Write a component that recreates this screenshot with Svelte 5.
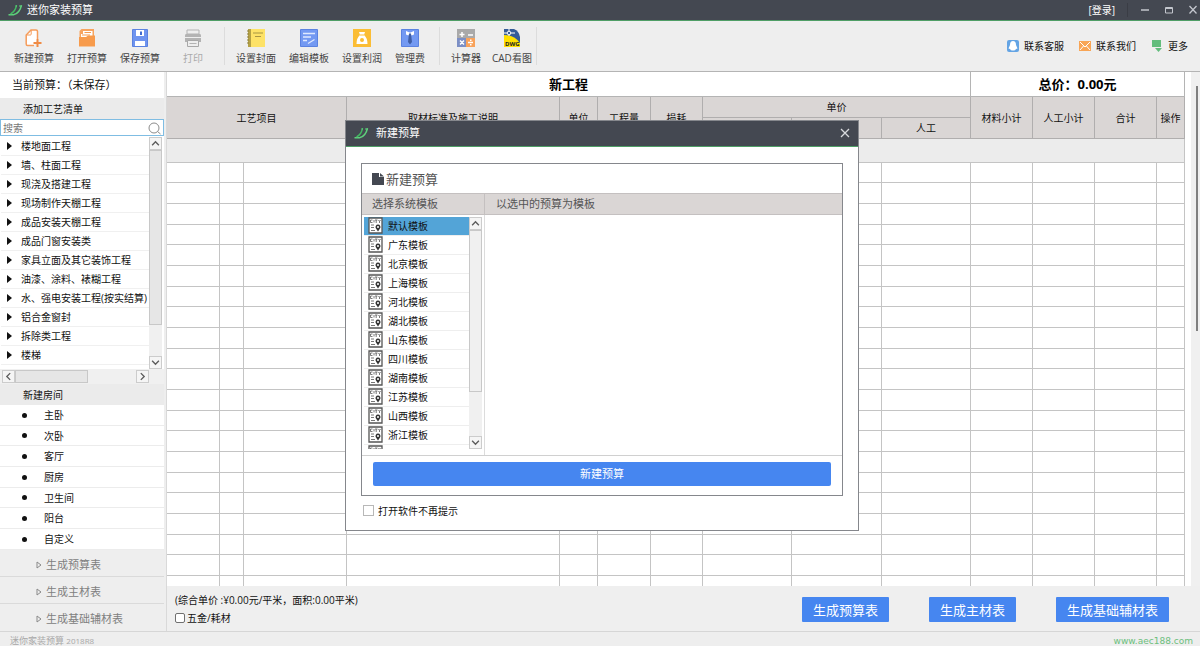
<script>
  const fileTools = [
    { icon: 'new', label: '新建预算' },
    { icon: 'open', label: '打开预算' },
    { icon: 'save', label: '保存预算' },
    { icon: 'print', label: '打印', disabled: true },
  ];
  const editTools = [
    { icon: 'cover', label: '设置封面' },
    { icon: 'template', label: '编辑模板' },
    { icon: 'profit', label: '设置利润' },
    { icon: 'fee', label: '管理费' },
  ];
  const extraTools = [
    { icon: 'calc', label: '计算器' },
    { icon: 'cad', label: 'CAD看图' },
  ];

  const crafts = [
    '楼地面工程', '墙、柱面工程', '现浇及搭建工程', '现场制作天棚工程',
    '成品安装天棚工程', '成品门窗安装类', '家具立面及其它装饰工程',
    '油漆、涂料、裱糊工程', '水、强电安装工程(按实结算)', '铝合金窗封',
    '拆除类工程', '楼梯',
  ];
  const rooms = ['主卧', '次卧', '客厅', '厨房', '卫生间', '阳台', '自定义'];
  const reports = ['生成预算表', '生成主材表', '生成基础辅材表'];

  const templates = [
    '默认模板', '广东模板', '北京模板', '上海模板', '河北模板', '湖北模板',
    '山东模板', '四川模板', '湖南模板', '江苏模板', '山西模板', '浙江模板', '',
  ];

  // relative column widths, the table stretches them to the window
  const columns = [53, 24, 103, 213, 38, 53, 52, 89, 90, 89, 62, 62, 62, 28];
  const emptyRows = Array.from({ length: 21 });

  let keyword = $state('');
  let selected = $state(0);
  let dialogOpen = $state(true);
  let hideNextTime = $state(false);
  let hardware = $state(false);
</script>

{#snippet logo()}
  <svg class="logo" viewBox="0 0 15 12" aria-hidden="true">
    <path d="M.5 10.800H5.500Q11.500 9.500 13.500 1.200" fill="none" stroke="#5fd07c" stroke-width="1.500" />
    <path d="M2.500 10Q7.500 7.500 8.500 1.200" fill="none" stroke="#43b862" stroke-width="1.500" />
    <path d="M7.500 2H9M11 2H14" stroke="#5fd07c" />
  </svg>
{/snippet}

{#snippet arrow(dir)}
  <svg class="arrow {dir}" viewBox="0 0 8 8" aria-hidden="true">
    <path d="M1 5.500L4 2.500L7 5.500" fill="none" stroke="#5c5c5c" stroke-width="1.200" />
  </svg>
{/snippet}

{#snippet toolIcon(name)}
  <svg class="tool-icon" viewBox="0 0 18 18" aria-hidden="true">
    {#if name === 'new'}
      <path d="M9 16.500H2.500Q1.200 16.500 1.200 15V6L6 1H11Q12.500 1 12.500 2.500V10" fill="#fff" stroke="#f59c5b" stroke-width="1.500" />
      <path d="M1.200 6H5.500Q6.200 6 6.200 5V1" fill="none" stroke="#f59c5b" />
      <path d="M12.500 10V18M8.500 14H16.500" stroke="#f08b45" stroke-width="2" />
    {:else if name === 'open'}
      <path d="M3.500 0H16V12H1.500V2Z" fill="#f7a45f" />
      <path d="M5 2H14.500V9H3V5H5Z" fill="#fff" />
      <path d="M6.500 3.500H13M4 6H12" stroke="#f59b50" />
      <path d="M1 8H8L10 6.500H17V17.500H1Z" fill="#f79b4c" />
    {:else if name === 'save'}
      <path d="M1.500 .5H16.500V17.500H1.500Z" fill="#6f94ef" stroke="#5b82e0" />
      <path d="M5 1H13V7H5Z" fill="#fff" />
      <path d="M9 2.500H11V6H9Z" fill="#416bd0" />
      <path d="M4 12H14V17H4Z" fill="#fff" />
    {:else if name === 'print'}
      <path d="M3 1H15V5H3Z" fill="#eee" stroke="#b3b3b3" />
      <path d="M2 5H16Q17 5 17 6.500V13H1V6.500Q1 5 2 5Z" fill="#b3b3b3" />
      <path d="M1 8.500H17" stroke="#eee" />
      <path d="M3.500 11.500H14.500V17.500H3.500Z" fill="#eee" stroke="#a8a8a8" />
      <path d="M5.500 14.500H12.500" stroke="#b3b3b3" />
    {:else if name === 'cover'}
      <path d="M1 0H18V18H1Z" fill="#fde267" />
      <path d="M1 0H4V18H1Z" fill="#b3a046" />
      <path d="M0 2H2M0 5H2M0 8H2M0 11H2M0 14H2" stroke="#8b7c36" />
      <path d="M6 4H16M8 7.500H14" stroke="#a89543" stroke-width="1.200" />
    {:else if name === 'template'}
      <path d="M.5 .5H17.500V17.500H.5Z" fill="#7399f2" stroke="#5b82e0" />
      <path d="M3 4.500H15M3 8H11M3 11.500H7M8 14.500L14.500 10.500" stroke="#dfe9ff" stroke-width="1.300" />
    {:else if name === 'profit'}
      <path d="M0 0H18V18H0Z" fill="#fbbd35" />
      <path d="M6 3H12L11 6Q14.500 9 14.500 15H3.500Q3.500 9 7 6Z" fill="#fff" />
      <path d="M7 6H11" stroke="#fbbd35" />
      <circle cx="9" cy="11" r="2" fill="#fbbd35" />
    {:else if name === 'fee'}
      <path d="M.5 .5H17.500V17.500H.5Z" fill="#7399f2" stroke="#5b82e0" />
      <path d="M5 2L8.500 3.500H9.500L13 2V5.500L10.500 6.500L9 4.500L7.500 6.500L5 5.500Z" fill="#fff" />
      <path d="M8 4.500H10L11 13L9 15.500L7 13Z" fill="#3f5ea5" />
    {:else if name === 'calc'}
      <path d="M0 0H18V9H0Z" fill="#a9a9a9" />
      <path d="M0 9H9V18H0Z" fill="#7c8fc5" />
      <path d="M9 9H18V18H9Z" fill="#f8a25a" />
      <path d="M5 3V8M2.500 5.500H7.500M11 6H16M3 11.500L7 15.500M7 11.500L3 15.500M11 13.500H16" stroke="#fff" stroke-width="1.500" />
      <path d="M13 10.500H14.500V12H13ZM13 15H14.500V16.500H13Z" fill="#fff" />
    {:else}
      <path d="M1 0H11Q16 2 17 8V18H1Z" fill="#365c98" />
      <path d="M1 6Q11 6 17 14V18H1Z" fill="#ffe000" />
      <path d="M1 4H4M8 4H12M6 0V2M6 6V7" stroke="#fff" />
      <circle cx="6" cy="4" r="1.800" fill="#365c98" stroke="#fff" />
      <text x="2" y="17" font-size="6" font-weight="700" fill="#222">DWG</text>
    {/if}
  </svg>
{/snippet}

{#snippet toolGroup(tools)}
  <div class="tool-group">
    {#each tools as tool}
      <button class="tool" disabled={tool.disabled}>
        {@render toolIcon(tool.icon)}
        <span>{tool.label}</span>
      </button>
    {/each}
  </div>
{/snippet}

<div class="app">
  <header class="titlebar">
    {@render logo()}
    <span class="app-name">迷你家装预算</span>
    <button class="login">[登录]</button>
    <div class="window-buttons">
      <button aria-label="最小化"><svg viewBox="0 0 10 10"><path d="M1 5H9" stroke="#c3c6cd" stroke-width="1.500" /></svg></button>
      <button aria-label="最大化"><svg viewBox="0 0 10 10"><path d="M1.500 2.500H8.500V8H1.500ZM1.500 3.500H8.500" fill="none" stroke="#c3c6cd" /></svg></button>
      <button aria-label="关闭"><svg viewBox="0 0 10 10"><path d="M1.500 1L8.500 8.500M8.500 1L1.500 8.500" stroke="#c3c6cd" stroke-width="1.300" /></svg></button>
    </div>
  </header>

  <nav class="toolbar">
    {@render toolGroup(fileTools)}
    {@render toolGroup(editTools)}
    {@render toolGroup(extraTools)}
    <div class="contacts">
      <button>
        <svg viewBox="0 0 14 14"><rect x="1" y="1" width="12" height="12" rx="2" fill="#64a4e4" /><path d="M7 2Q10 2 10 6L11.500 9.500L10 10Q9 12 7 11.500Q5 12 4 10L2.500 9.500L4 6Q4 2 7 2Z" fill="#fff" /></svg>
        联系客服
      </button>
      <button>
        <svg viewBox="0 0 14 14"><rect x="1" y="2" width="12" height="10" fill="#f8a556" /><path d="M2 3L7 8L12 3M2 11L5.500 7M12 11L8.500 7" fill="none" stroke="#fff" /></svg>
        联系我们
      </button>
      <button>
        <svg viewBox="0 0 14 14"><path d="M2 1H11V8H2Z" fill="#62bd7c" /><path d="M5 9H12L8.500 13Z" fill="#62bd7c" /></svg>
        更多
      </button>
    </div>
  </nav>

  <div class="body">
    <aside class="sidebar">
      <div class="current">当前预算：（未保存）</div>
      <h2>添加工艺清单</h2>
      <div class="search">
        <input type="text" placeholder="搜索" aria-label="搜索" bind:value={keyword} />
        <svg viewBox="0 0 14 14" aria-hidden="true"><circle cx="6" cy="7" r="5" fill="none" stroke="#8c8c8c" /><path d="M9.500 10.500L12.500 13" stroke="#8c8c8c" /></svg>
      </div>
      <div class="tree-area">
        <ul class="tree">
          {#each crafts as craft}
            <li><span class="caret"></span>{craft}</li>
          {/each}
        </ul>
        <div class="vscroll tree-scroll">
          <button aria-label="向上">{@render arrow('up')}</button>
          <div class="track"><div class="thumb"></div></div>
          <button aria-label="向下">{@render arrow('down')}</button>
        </div>
      </div>
      <div class="hscroll">
        <button aria-label="向左">{@render arrow('left')}</button>
        <div class="track"><div class="thumb"></div></div>
        <button aria-label="向右">{@render arrow('right')}</button>
      </div>
      <h2>新建房间</h2>
      <ul class="rooms">
        {#each rooms as room}
          <li><span class="dot"></span>{room}</li>
        {/each}
      </ul>
      <div class="reports">
        {#each reports as report}
          <button>
            <svg viewBox="0 0 6 8" aria-hidden="true"><path d="M1 1L5 4L1 7Z" fill="none" stroke="#8a8a8a" /></svg>
            {report}
          </button>
        {/each}
      </div>
    </aside>

    <main class="main">
      <div class="sheet">
        <div class="table-wrap">
          <table>
            <colgroup>
              {#each columns as width}
                <col style:width="{width}px" />
              {/each}
            </colgroup>
            <thead>
              <tr class="project">
                <th colspan="10">新工程</th>
                <th colspan="4">总价：0.00元</th>
              </tr>
              <tr class="head">
                <th colspan="3" rowspan="2">工艺项目</th>
                <th rowspan="2">取材标准及施工说明</th>
                <th rowspan="2">单位</th>
                <th rowspan="2">工程量</th>
                <th rowspan="2">损耗</th>
                <th colspan="3">单价</th>
                <th rowspan="2">材料小计</th>
                <th rowspan="2">人工小计</th>
                <th rowspan="2">合计</th>
                <th rowspan="2">操作</th>
              </tr>
              <tr class="head">
                <th></th>
                <th></th>
                <th>人工</th>
              </tr>
            </thead>
            <tbody>
              <tr class="band"><td colspan="14"></td></tr>
            </tbody>
            <tbody class="rows">
              {#each emptyRows as _}
                <tr>
                  {#each columns as _}<td></td>{/each}
                </tr>
              {/each}
            </tbody>
          </table>
        </div>
        <div class="page-scroll"><div class="thumb"></div></div>
      </div>

      <footer class="summary">
        <div class="totals">
          <span>(综合单价 :¥0.00元/平米，面积:0.00平米)</span>
          <label><input type="checkbox" class="rounded" bind:checked={hardware} />五金/耗材</label>
        </div>
        <div class="actions">
          {#each reports as report}
            <button>{report}</button>
          {/each}
        </div>
      </footer>
    </main>
  </div>

  <footer class="statusbar">
    <span>迷你家装预算 <small>2018R8</small></span>
    <a href="http://www.aec188.com">www.aec188.com</a>
  </footer>

  {#if dialogOpen}
    <div class="overlay">
      <div class="dialog" role="dialog" aria-labelledby="dialog-title">
        <div class="dialog-bar">
          {@render logo()}
          <span id="dialog-title">新建预算</span>
          <button aria-label="关闭" onclick={() => (dialogOpen = false)}>
            <svg viewBox="0 0 10 10"><path d="M1 1L9 9M9 1L1 9" stroke="#d8dade" stroke-width="1.300" /></svg>
          </button>
        </div>
        <div class="dialog-body">
          <div class="panel">
            <div class="panel-title">
              <svg viewBox="0 0 12 14" aria-hidden="true"><path d="M0 1H7V5H12V13H0Z" fill="#444851" /><path d="M8 1L12 4.500H8Z" fill="#444851" /></svg>
              新建预算
            </div>
            <div class="panel-head">
              <span>选择系统模板</span>
              <span>以选中的预算为模板</span>
            </div>
            <div class="panel-content">
              <div class="picker">
                <ul class="templates">
                  {#each templates as name, i}
                    <li>
                      <button class:active={selected === i} onclick={() => (selected = i)}>
                        <svg viewBox="0 0 15 17" aria-hidden="true">
                          <path d="M1 1H14V16H1Z" fill="#fff" stroke="#555" stroke-width="1.300" />
                          <path d="M4.500 3H2.500V5.500H4.500M6 3V5.500M7 3H9.500M8.200 3V6M10.500 3L11.500 4.500L12.500 3M11.500 4.500V6" fill="none" stroke="#555" stroke-width=".8" />
                          <path d="M3 8H6M3 10.500H6M3 13.500H7" stroke="#777" />
                          <path d="M10 7.500A2.500 2.500 0 0 1 12 11.500L10 14.500L8 11.500A2.500 2.500 0 0 1 10 7.500Z" fill="#333" />
                          <circle cx="10" cy="10" r="1" fill="#fff" />
                        </svg>
                        {name}
                      </button>
                    </li>
                  {/each}
                </ul>
                <div class="vscroll picker-scroll">
                  <button aria-label="向上">{@render arrow('up')}</button>
                  <div class="track"><div class="thumb"></div></div>
                  <button aria-label="向下">{@render arrow('down')}</button>
                </div>
              </div>
              <div class="budgets"></div>
            </div>
            <div class="panel-foot">
              <button onclick={() => (dialogOpen = false)}>新建预算</button>
            </div>
          </div>
          <label class="remember"><input type="checkbox" bind:checked={hideNextTime} />打开软件不再提示</label>
        </div>
      </div>
    </div>
  {/if}
</div>

<style>
  :global(body) {
    margin: 0;
  }

  .app {
    position: relative;
    display: flex;
    flex-direction: column;
    height: 100vh;
    overflow: hidden;
    background: #eee;
    color: #111;
    font-family: "Open Sans", "Noto Sans CJK SC", sans-serif;
    font-size: 10px;
    line-height: 14px;
  }
  .app * {
    box-sizing: border-box;
  }
  button {
    padding: 0;
    border: 0;
    background: none;
    color: inherit;
    font: inherit;
    cursor: pointer;
  }
  ul {
    margin: 0;
    padding: 0;
    list-style: none;
  }
  svg {
    display: block;
    flex-shrink: 0;
  }

  /* title bar */
  .titlebar {
    display: flex;
    align-items: center;
    height: 21px;
    flex-shrink: 0;
    padding-left: 8px;
    background: #444851;
    border-bottom: 1px solid #4f9e66;
    color: #fff;
  }
  .logo {
    width: 15px;
    height: 12px;
  }
  .app-name {
    margin-left: 4px;
    font-size: 11px;
  }
  .login {
    margin-left: auto;
    padding-right: 12px;
    border-right: 1px solid #3a3d45;
  }
  .window-buttons {
    display: flex;
    gap: 14px;
    padding-left: 12px;
    padding-right: 2px;
  }
  .window-buttons svg {
    width: 10px;
    height: 10px;
  }

  /* toolbar */
  .toolbar {
    display: flex;
    align-items: center;
    height: 51px;
    flex-shrink: 0;
    padding-left: 8px;
    border-bottom: 1px solid #b4b4b4;
  }
  .tool-group {
    display: flex;
    gap: 1px;
    padding-top: 2px;
    padding-right: 5px;
    border-right: 1px solid #dcdcdc;
  }
  .tool-group + .tool-group {
    padding-left: 5px;
    padding-right: 8px;
  }
  .tool {
    display: flex;
    flex-direction: column;
    align-items: center;
    gap: 4px;
    padding: 0 6px;
    color: #444;
    white-space: nowrap;
  }
  .tool:disabled {
    min-width: 52px;
    color: #aaa;
  }
  .tool-icon {
    width: 18px;
    height: 18px;
  }
  .tool-group:nth-child(3) {
    padding-right: 0;
  }
  .tool-group:nth-child(3) .tool:last-child {
    padding: 0 4px;
  }
  .contacts {
    display: flex;
    gap: 14px;
    margin-left: auto;
    padding-right: 12px;
  }
  .contacts button {
    display: flex;
    align-items: center;
    gap: 4px;
  }
  .contacts svg {
    width: 14px;
    height: 14px;
  }

  .body {
    display: flex;
    flex: 1;
    min-height: 0;
  }

  /* sidebar */
  .sidebar {
    display: flex;
    flex-direction: column;
    width: 167px;
    flex-shrink: 0;
    padding-right: 2px;
    border-right: 1px solid #d9d9d9;
  }
  .current {
    height: 26px;
    padding-left: 12px;
    background: #fff;
    font-size: 11px;
    line-height: 26px;
  }
  h2 {
    height: 21px;
    margin: 0;
    padding-left: 23px;
    background: #ebebeb;
    font-size: 10px;
    font-weight: 400;
    line-height: 22px;
  }
  .search {
    display: flex;
    align-items: center;
    height: 17px;
    padding-right: 1px;
    border: 1px solid #7fbde3;
    background: #fff;
  }
  .search input {
    flex: 1;
    min-width: 0;
    padding: 0 2px;
    border: 0;
    outline: 0;
    background: none;
    font: inherit;
  }
  .search input::placeholder {
    color: #777;
  }
  .search svg {
    width: 14px;
    height: 14px;
  }
  .tree-area {
    display: flex;
    flex: 1;
    min-height: 0;
    padding: 1px 2px 0 1px;
    background: #fff;
  }
  .tree {
    flex: 1;
    overflow: hidden;
    white-space: nowrap;
  }
  .tree li {
    display: flex;
    align-items: center;
    gap: 9px;
    height: 19px;
    padding-left: 6px;
    border-bottom: 1px solid #f0f0f0;
  }
  .caret {
    border: 4px solid transparent;
    border-left: 5px solid #111;
    border-right: 0;
  }

  /* scroll bars */
  .vscroll {
    display: flex;
    flex-direction: column;
    width: 13px;
    flex-shrink: 0;
    background: #f0f0f0;
  }
  .vscroll button,
  .hscroll button {
    display: flex;
    align-items: center;
    justify-content: center;
    width: 13px;
    height: 13px;
    flex-shrink: 0;
    border: 1px solid #ccc;
    background: #f5f5f5;
  }
  .track {
    flex: 1;
  }
  .thumb {
    border: 1px solid #c8c8c8;
    background: #e6e6e6;
  }
  .tree-scroll .thumb {
    height: 85%;
  }
  .picker-scroll .thumb {
    height: 79%;
    background: #f0f0f0;
  }
  .arrow {
    width: 9px;
    height: 9px;
  }
  .down {
    transform: rotate(180deg);
  }
  .left {
    transform: rotate(270deg);
  }
  .right {
    transform: rotate(90deg);
  }
  .hscroll {
    display: flex;
    height: 15px;
    padding: 1px 15px 1px 2px;
    background: #f0f0f0;
  }
  .hscroll .thumb {
    width: 60%;
    height: 13px;
  }

  .rooms li {
    display: flex;
    align-items: center;
    height: 21px;
    padding-left: 22px;
    gap: 17px;
    background: #fff;
    border-bottom: 1px solid #ececec;
  }
  .rooms li:nth-child(3n + 2) {
    height: 20px;
  }
  .dot {
    width: 5px;
    height: 5px;
    border-radius: 50%;
    background: #111;
  }
  .reports button {
    display: flex;
    align-items: center;
    gap: 4px;
    width: 100%;
    height: 27px;
    padding-top: 3px;
    padding-left: 36px;
    border-bottom: 1px solid #dadada;
    color: #808080;
    font-size: 11px;
  }
  .reports button:last-child {
    border-bottom: 0;
  }
  .reports svg {
    width: 6px;
    height: 8px;
  }

  /* budget sheet */
  .main {
    display: flex;
    flex-direction: column;
    flex: 1;
    min-width: 0;
  }
  .sheet {
    display: flex;
    flex: 1;
    min-height: 0;
    background: #fff;
  }
  .table-wrap {
    flex: 1;
    overflow: hidden;
  }
  table {
    width: 100%;
    table-layout: fixed;
    border-spacing: 0;
  }
  th,
  td {
    padding: 0;
    border-right: 1px solid #c4c4c4;
    border-bottom: 1px solid #c4c4c4;
    font-weight: 400;
  }
  .project th {
    height: 25px;
    border-color: #b4b4b4;
    color: #000;
    font-size: 13px;
    font-weight: 700;
    line-height: 20px;
  }
  .head th {
    height: 21px;
    border-color: #b0aeae;
    background: #dad6d5;
  }
  .band td {
    height: 24px;
    background: #ececec;
  }
  .rows td {
    height: 21px;
  }
  .rows tr:nth-child(3n + 1) td {
    height: 20px;
  }
  .page-scroll {
    width: 9px;
    flex-shrink: 0;
    margin-left: 6px;
    padding: 14px 2px 0 5px;
    background: #f0f0f0;
  }
  .page-scroll .thumb {
    height: 49%;
    border: 0;
    background: #808080;
  }

  .summary {
    display: flex;
    align-items: center;
    justify-content: space-between;
    height: 45px;
    flex-shrink: 0;
    padding: 0 31px 0 8px;
    background: #efefef;
  }
  .totals {
    display: flex;
    flex-direction: column;
    gap: 4px;
    white-space: nowrap;
  }
  label {
    display: flex;
    align-items: center;
    gap: 2px;
  }
  input[type="checkbox"] {
    appearance: none;
    width: 11px;
    height: 11px;
    margin: 0;
    border: 1px solid #b8b8b8;
    background: #fff;
  }
  input[type="checkbox"].rounded {
    width: 10px;
    height: 10px;
    border-color: #707070;
    border-radius: 2px;
  }
  input[type="checkbox"]:checked {
    background: #4686f0;
  }
  .actions {
    display: flex;
    gap: 40px;
    padding-top: 2px;
  }
  .actions button {
    height: 25px;
    padding: 0 11px;
    border-radius: 1px;
    background: #4686f0;
    color: #fff;
    font-size: 13px;
    line-height: 20px;
  }

  .statusbar {
    display: flex;
    align-items: center;
    justify-content: space-between;
    height: 15px;
    flex-shrink: 0;
    padding: 3px 7px 0 10px;
    border-top: 1px solid #d6d6d6;
    color: #a8a8a8;
    font-size: 9px;
    line-height: 12px;
  }
  .statusbar small {
    font-size: 8px;
  }
  .statusbar a {
    color: #6cbf7d;
    font-family: "DejaVu Sans", sans-serif;
    text-decoration: none;
  }

  /* new budget dialog */
  .overlay {
    position: absolute;
    inset: 0;
    display: grid;
    place-items: center;
    padding: 4px 0 0 4px;
  }
  .dialog {
    width: 514px;
    max-width: 100%;
    border: 1px solid #85878c;
    background: #fff;
  }
  .dialog-bar {
    display: flex;
    align-items: center;
    gap: 7px;
    height: 26px;
    padding: 0 8px;
    background: #444851;
    border-bottom: 1px solid #4f9e66;
    color: #fff;
    font-size: 11px;
  }
  .dialog-bar button {
    margin-left: auto;
  }
  .dialog-bar button svg {
    width: 10px;
    height: 10px;
  }
  .dialog-body {
    padding: 16px 15px 12px;
  }
  .panel {
    border: 1px solid #85878c;
  }
  .panel-title {
    display: flex;
    align-items: center;
    gap: 2px;
    height: 29px;
    padding: 2px 0 0 10px;
    color: #555;
    font-size: 13px;
    line-height: 20px;
  }
  .panel-title svg {
    width: 12px;
    height: 14px;
  }
  .panel-head {
    display: grid;
    grid-template-columns: 122px 1fr;
    height: 22px;
    border-top: 1px solid #c4c0c0;
    border-bottom: 1px solid #c4c0c0;
    background: #dad6d5;
    color: #555;
    font-size: 11px;
    line-height: 20px;
  }
  .panel-head span {
    padding-left: 10px;
  }
  .panel-head span + span {
    padding-left: 11px;
    border-left: 1px solid #c4c0c0;
  }
  .panel-content {
    display: grid;
    grid-template-columns: 122px 1fr;
    border-bottom: 1px solid #d0d0d0;
  }
  .picker {
    display: flex;
    height: 240px;
    padding: 2px 2px 6px;
  }
  .templates {
    flex: 1;
    overflow: hidden;
  }
  .templates li {
    height: 19px;
    border-bottom: 1px solid #eee;
  }
  .templates button {
    display: flex;
    align-items: center;
    gap: 5px;
    width: 100%;
    height: 18px;
    padding-left: 4px;
  }
  .templates button.active {
    background: #53a4d7;
  }
  .templates svg {
    width: 15px;
    height: 17px;
  }
  .budgets {
    border-left: 1px solid #dcdcdc;
  }
  .panel-foot {
    padding: 6px 11px 9px;
  }
  .panel-foot button {
    width: 100%;
    height: 24px;
    border-radius: 2px;
    background: #4686f0;
    color: #fff;
    font-size: 11px;
  }
  .remember {
    gap: 4px;
    margin-top: 8px;
    padding-left: 2px;
  }
</style>
